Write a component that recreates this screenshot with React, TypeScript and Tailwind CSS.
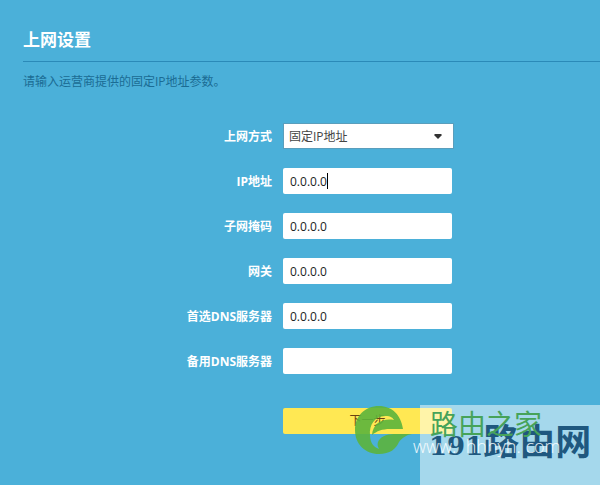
import { useState } from 'react';

interface AddressField {
  id: string;
  label: string;
  value: string;
  caret?: boolean;
}

const fields: AddressField[] = [
  { id: 'ip', label: 'IP地址', value: '0.0.0.0', caret: true },
  { id: 'mask', label: '子网掩码', value: '0.0.0.0' },
  { id: 'gateway', label: '网关', value: '0.0.0.0' },
  { id: 'dns1', label: '首选DNS服务器', value: '0.0.0.0' },
  { id: 'dns2', label: '备用DNS服务器', value: '' },
];

const labelClass = 'w-[249px] shrink-0 pt-0.5 text-right text-xs font-bold text-white';

function FieldRow({ field }: { field: AddressField }) {
  const [value, setValue] = useState(field.value);

  return (
    <div className="flex items-center gap-[11px]">
      <label htmlFor={field.id} className={labelClass}>
        {field.label}
      </label>
      <div className="relative">
        <input
          id={field.id}
          type="text"
          value={value}
          onChange={(e) => setValue(e.target.value)}
          className="block h-[26px] w-[169px] rounded-xs bg-white px-[7px] font-['Open_Sans','Noto_Sans_CJK_SC',sans-serif] text-xs text-[#222222] outline-none"
        />
        {field.caret && <span className="absolute top-[5px] left-[44px] h-4 w-px bg-black" />}
      </div>
    </div>
  );
}

function Watermark() {
  return (
    <div className="pointer-events-none absolute top-[405px] left-[354px] h-20 w-[246px]">
      <div className="absolute top-0 right-0 left-[66px] h-full bg-white/50" />
      <svg viewBox="0 0 60 50" className="absolute top-0 left-0 h-[50px] w-[60px]" aria-hidden="true">
        <path
          fill="#5cb43c"
          fillOpacity="0.9"
          d="M49 24C47 10 38 1 25 1C11 1 1 11 1 25C1 39 11 49 25 49C36 49 42 44 45 37C48 33 52 30 58 29H40C32 29 26 32 24 37C23 40 24 42 25 44C19 42 16 37 16 30C15 20 21 10 33 11C36 11 38 12 40 15C29 13 19 18 18 30C23 26 28 24 36 24Z"
        />
      </svg>
      <span className="absolute top-[14px] left-[75px] flex items-baseline leading-10 font-bold whitespace-nowrap text-[#1f587f]">
        <span className="font-['DejaVu_Serif',serif] text-[26px]">191</span>
        <span className="font-['Noto_Sans_CJK_SC',sans-serif] text-[36px]">路由网</span>
      </span>
      <span className="absolute top-0 left-[76px] font-['Noto_Sans_CJK_SC',sans-serif] text-[28px] leading-9 whitespace-nowrap text-[#46a35a]">
        路由之家
      </span>
      <span className="absolute top-[27px] left-[59px] font-['Open_Sans',sans-serif] text-lg leading-7 font-light whitespace-pre text-white/90">
        www.  hhhyh. com
      </span>
    </div>
  );
}

export default function App() {
  const [mode, setMode] = useState('static');

  return (
    <div className="relative min-h-screen overflow-hidden bg-[#4bb0d9] pt-7 pl-[23px] font-['Open_Sans','Noto_Sans_CJK_SC',sans-serif]">
      <h1 className="h-[34px] border-b border-[#2b8ab8] text-[17px] leading-6 font-bold text-white">
        上网设置
      </h1>
      <p className="pt-3 text-xs leading-4 text-[#1b6c94]">请输入运营商提供的固定IP地址参数。</p>

      <form className="mt-[33px] flex flex-col gap-[19px]" onSubmit={(e) => e.preventDefault()}>
        <div className="flex items-center gap-[11px]">
          <label htmlFor="mode" className={labelClass}>
            上网方式
          </label>
          <div className="relative">
            <select
              id="mode"
              value={mode}
              onChange={(e) => setMode(e.target.value)}
              className="block h-[26px] w-[171px] appearance-none border border-[#5a9ebc] bg-white px-[5px] pt-0.5 text-xs text-[#444444] outline-none"
            >
              <option value="static">固定IP地址</option>
              <option value="dhcp">自动获得IP地址</option>
              <option value="pppoe">宽带拨号上网</option>
            </select>
            <svg viewBox="0 0 8 5" className="pointer-events-none absolute top-[11px] right-3 h-[5px] w-2" aria-hidden="true">
              <path d="M1 0H7L8 1L4 5L0 1Z" fill="#333333" />
            </svg>
          </div>
        </div>

        {fields.map((field) => (
          <FieldRow key={field.id} field={field} />
        ))}

        <button
          type="submit"
          className="mt-[15px] ml-[260px] h-[26px] w-[169px] cursor-pointer rounded-xs bg-[#ffe853] text-xs text-[#6b4213]"
        >
          下一步
        </button>
      </form>

      <Watermark />
    </div>
  );
}
